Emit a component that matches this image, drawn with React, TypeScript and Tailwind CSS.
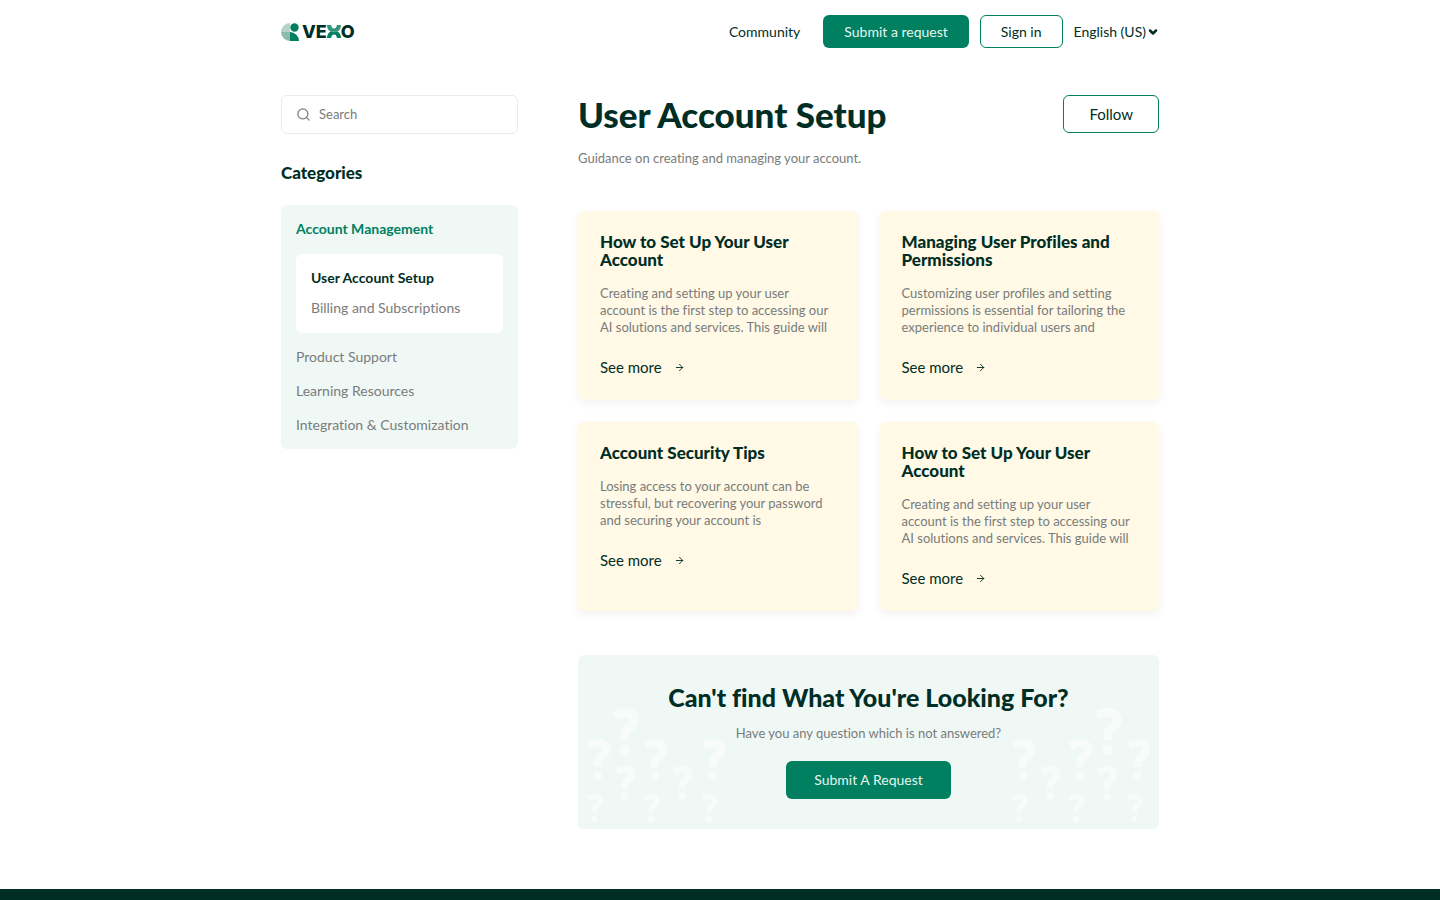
import { ArrowRight, ChevronDown, Search } from "lucide-react";

const articles = [
  {
    title: "How to Set Up Your User Account",
    text: "Creating and setting up your user account is the first step to accessing our AI solutions and services. This guide will",
  },
  {
    title: "Managing User Profiles and Permissions",
    text: "Customizing user profiles and setting permissions is essential for tailoring the experience to individual users and",
  },
  {
    title: "Account Security Tips",
    text: "Losing access to your account can be stressful, but recovering your password and securing your account is",
  },
  {
    title: "How to Set Up Your User Account",
    text: "Creating and setting up your user account is the first step to accessing our AI solutions and services. This guide will",
  },
];

function Logo() {
  return (
    <a href="#" aria-label="VEXO" className="flex items-center gap-[3px]">
      <svg viewBox="0 0 18 18" className="size-[18px]" aria-hidden="true">
        <path d="M9 0A9 9 0 0 0 0 9H9Z" fill="#b5d3c8" />
        <path d="M0 9A9 9 0 0 0 9 18V9Z" fill="#8dbba9" />
        <circle cx="13.5" cy="4.5" r="4.2" fill="#008060" />
        <path d="M9 9A9 9 0 0 1 18 18H9Z" fill="#008060" />
      </svg>
      <span className="flex items-center font-['Inter',sans-serif] text-lg leading-5 font-extrabold">
        VE
        <svg viewBox="0 0 14 13" className="h-[13px] w-[14px]" aria-hidden="true">
          <path d="M0 0H4C4.500 2.500 5.500 3.500 7 3.500S9.500 2.500 10 0H14C14 3.500 12.500 5.500 10.500 6.600H3.500C1.500 5.500 0 3.500 0 0Z" fill="#2f967a" />
          <path d="M0 13H4C4.500 10.500 5.500 9.500 7 9.500S9.500 10.500 10 13H14C14 9.500 12.500 7.500 10.500 6.400H3.500C1.500 7.500 0 9.500 0 13Z" fill="#008060" />
        </svg>
        O
      </span>
    </a>
  );
}

function Header() {
  return (
    <header className="mx-auto flex w-full max-w-[878px] items-center justify-between py-[15px]">
      <Logo />
      <nav className="flex items-center text-sm">
        <a href="#" className="mr-[23px]">Community</a>
        <button className="mr-[11px] h-[33px] rounded-md bg-[#008060] px-[21px] text-[#e6f5f0]">Submit a request</button>
        <button className="mr-[11px] h-[33px] rounded-md border border-[#008060] px-5">Sign in</button>
        <button className="flex items-center gap-px">
          English (US)
          <ChevronDown className="size-3" strokeWidth={5} />
        </button>
      </nav>
    </header>
  );
}

function Sidebar() {
  return (
    <aside className="w-[237px] shrink-0">
      <label className="flex h-[39px] items-center gap-2 rounded-md border border-[#ebebeb] px-[14px] text-[#797c7b]">
        <Search className="size-[15px] shrink-0" strokeWidth={2} />
        <input
          type="search"
          aria-label="Search"
          placeholder="Search"
          className="w-full min-w-0 text-[13px] outline-none placeholder:text-[#797c7b]"
        />
      </label>
      <h2 className="mt-7 text-[17px] leading-[22px] font-black">Categories</h2>
      <nav className="mt-[21px] rounded-md bg-[#f0f8f6] p-[15px] text-sm leading-[18px] text-[#797c7b]">
        <a href="#" className="block font-bold text-[#008060]">Account Management</a>
        <div className="mt-4 mb-[15px] flex flex-col gap-3 rounded-md bg-white px-[15px] pt-[15px] pb-4">
          <a href="#" className="font-bold text-[#002e25]">User Account Setup</a>
          <a href="#">Billing and Subscriptions</a>
        </div>
        <div className="flex flex-col gap-4">
          <a href="#">Product Support</a>
          <a href="#">Learning Resources</a>
          <a href="#">Integration &amp; Customization</a>
        </div>
      </nav>
    </aside>
  );
}

function ArticleCard({ title, text }: { title: string; text: string }) {
  return (
    <article className="rounded-md bg-[#fff9e6] p-[22px] shadow-[0_3px_10px_rgba(0,0,0,0.06)]">
      <h2 className="text-[17px] leading-[18px] font-black">{title}</h2>
      <p className="mt-4 text-[13px] leading-[17px] text-[#797c7b]">{text}</p>
      <a href="#" className="mt-5 flex items-center gap-3 text-[15px] leading-[22px]">
        See more
        <ArrowRight className="size-[11px]" strokeWidth={2} />
      </a>
    </article>
  );
}

function QuestionMark({ x, y, height }: { x: number; y: number; height: number }) {
  return (
    <svg x={x} y={y} width={(height * 28) / 47} height={height} viewBox="0 0 28 47">
      <path
        d="M3 8C7 5.500 11 4.500 14 4.500C20 4.500 23.500 7.500 23.500 12C23.500 20 13.500 19 13.500 28V32"
        fill="none"
        stroke="#f7fcfa"
        strokeWidth="9"
      />
      <circle cx="13.5" cy="42" r="5" fill="#f7fcfa" />
    </svg>
  );
}

function QuestionMarks({ bigX, className }: { bigX: number; className: string }) {
  return (
    <svg
      viewBox="0 0 140 115"
      className={`pointer-events-none absolute top-[53px] h-[115px] w-[140px] ${className}`}
      aria-hidden="true"
    >
      <QuestionMark x={bigX} y={0} height={47} />
      {[0, 57, 115].map((x) => (
        <QuestionMark key={x} x={x} y={31} height={41} />
      ))}
      {[29, 86].map((x) => (
        <QuestionMark key={x} x={x} y={58} height={34} />
      ))}
      {[0, 57, 115].map((x) => (
        <QuestionMark key={x} x={x} y={86} height={28} />
      ))}
    </svg>
  );
}

export default function App() {
  return (
    <div className="flex min-h-screen flex-col bg-white font-['Lato',sans-serif] text-[#002e25] [font-variant-ligatures:none]">
      <Header />
      <main className="mx-auto mt-8 mb-[60px] flex w-full max-w-[878px] items-start gap-[60px]">
        <Sidebar />
        <div className="min-w-0 flex-1">
          <div className="flex items-center justify-between">
            <h1 className="text-[35px] leading-[38px] font-black">User Account Setup</h1>
            <button className="h-[38px] rounded-md border border-[#008060] px-[25px] text-[15px]">Follow</button>
          </div>
          <p className="mt-[15px] text-[13px] leading-5 text-[#797c7b]">
            Guidance on creating and managing your account.
          </p>
          <div className="mt-[43px] grid grid-cols-2 gap-[22px]">
            {articles.map((article, i) => (
              <ArticleCard key={i} {...article} />
            ))}
          </div>
          <section className="relative mt-11 flex flex-col items-center rounded-md bg-[#f0f8f6] pt-6 pb-[30px]">
            <QuestionMarks bigX={25} className="left-[8px]" />
            <QuestionMarks bigX={83} className="right-2" />
            <h2 className="text-[25px] leading-9 font-black">Can't find What You're Looking For?</h2>
            <p className="mt-2 text-[13px] leading-5 text-[#797c7b]">Have you any question which is not answered?</p>
            <button className="mt-[18px] h-[38px] rounded-md bg-[#008060] px-7 text-sm text-[#e6f5f0]">
              Submit A Request
            </button>
          </section>
        </div>
      </main>
      <footer className="min-h-[11px] flex-1 bg-[#002e25]" />
    </div>
  );
}
